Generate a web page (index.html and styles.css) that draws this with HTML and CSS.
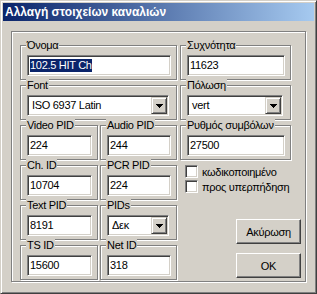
FILE: index.html
```html
<!DOCTYPE html>
<html lang="el">
<head>
    <meta charset="UTF-8">
    <title>Αλλαγή στοιχείων καναλιών</title>
    <link rel="stylesheet" href="styles.css">
</head>
<body>
    <div class="window">
        <div class="titlebar">Αλλαγή στοιχείων καναλιών</div>

        <div class="frame">
            <div class="left">
                <div class="group wide">
                    <span class="legend">Όνομα</span>
                    <div class="edit"><span class="selected">102.5 HIT Ch</span></div>
                </div>
                <div class="group wide">
                    <span class="legend">Font</span>
                    <div class="combo">
                        <span class="value">ISO 6937 Latin</span>
                        <span class="drop"><svg width="7" height="4" viewBox="0 0 7 4"><rect x="0" y="0" width="7" height="1"/><rect x="1" y="1" width="5" height="1"/><rect x="2" y="2" width="3" height="1"/><rect x="3" y="3" width="1" height="1"/></svg></span>
                    </div>
                </div>

                <div class="group">
                    <span class="legend">Video PID</span>
                    <div class="edit">224</div>
                </div>
                <div class="group">
                    <span class="legend">Audio PID</span>
                    <div class="edit">244</div>
                </div>

                <div class="group">
                    <span class="legend">Ch. ID</span>
                    <div class="edit">10704</div>
                </div>
                <div class="group">
                    <span class="legend">PCR PID</span>
                    <div class="edit">224</div>
                </div>

                <div class="group">
                    <span class="legend">Text PID</span>
                    <div class="edit">8191</div>
                </div>
                <div class="group">
                    <span class="legend">PIDs</span>
                    <div class="combo">
                        <span class="value">Δεκ</span>
                        <span class="drop"><svg width="7" height="4" viewBox="0 0 7 4"><rect x="0" y="0" width="7" height="1"/><rect x="1" y="1" width="5" height="1"/><rect x="2" y="2" width="3" height="1"/><rect x="3" y="3" width="1" height="1"/></svg></span>
                    </div>
                </div>

                <div class="group">
                    <span class="legend">TS ID</span>
                    <div class="edit">15600</div>
                </div>
                <div class="group">
                    <span class="legend">Net ID</span>
                    <div class="edit">318</div>
                </div>
            </div>

            <div class="right">
                <div class="group">
                    <span class="legend">Συχνότητα</span>
                    <div class="edit">11623</div>
                </div>
                <div class="group">
                    <span class="legend">Πόλωση</span>
                    <div class="combo">
                        <span class="value">vert</span>
                        <span class="drop"><svg width="7" height="4" viewBox="0 0 7 4"><rect x="0" y="0" width="7" height="1"/><rect x="1" y="1" width="5" height="1"/><rect x="2" y="2" width="3" height="1"/><rect x="3" y="3" width="1" height="1"/></svg></span>
                    </div>
                </div>
                <div class="group">
                    <span class="legend">Ρυθμός συμβόλων</span>
                    <div class="edit">27500</div>
                </div>

                <div class="checks">
                    <label class="check"><span class="box"></span>κωδικοποιημένο</label>
                    <label class="check"><span class="box"></span>προς υπερπήδηση</label>
                </div>

                <button class="btn cancel">Ακύρωση</button>
                <button class="btn ok">OK</button>
            </div>
        </div>
    </div>
</body>
</html>
```
FILE: styles.css
```css
body {
    margin: 0;
    background: #d4d0c8;
    font-family: "Liberation Sans", Arial, sans-serif;
    font-size: 11px;
    letter-spacing: -0.3px;
    color: #000;
}

.window {
    width: 317px;
    height: 294px;
    box-sizing: border-box;
    padding: 2px;
    background: #d4d0c8;
    border: 1px solid;
    border-color: #d4d0c8 #404040 #404040 #d4d0c8;
    box-shadow: inset 1px 1px #fff, inset -1px -1px #808080;
}

.titlebar {
    height: 18px;
    line-height: 18px;
    padding-left: 2px;
    background: linear-gradient(to right, #0a246a, #a6caf0);
    color: #fff;
    font-size: 12px;
    font-weight: bold;
    letter-spacing: 0;
    white-space: nowrap;
}

/* outer etched frame */
.frame {
    display: flex;
    height: 251px;
    box-sizing: border-box;
    margin: 10px 8px 0;
    padding: 13px 4px 1px 8px;
    border: 1px solid #808080;
    box-shadow: inset 1px 1px #fff, 1px 1px #fff;
}

.left {
    width: 157px;
    display: grid;
    grid-template-columns: 78px 77px;
    grid-auto-rows: 35px;
    column-gap: 2px;
    row-gap: 5px;
}

.wide {
    grid-column: span 2;
}

.right {
    flex: 1;
    margin-left: 3px;
    display: flex;
    flex-direction: column;
}

.right .group {
    width: 111px;
    height: 35px;
    margin-bottom: 5px;
}

/* group box */
.group {
    position: relative;
    box-sizing: border-box;
    padding: 9px 5px 0 6px;
    border: 1px solid #808080;
    box-shadow: inset 1px 1px #fff, 1px 1px #fff;
}

.legend {
    position: absolute;
    top: -7px;
    left: 5px;
    padding: 0 1px;
    line-height: 13px;
    background: #d4d0c8;
    white-space: nowrap;
}

/* sunken fields */
.edit,
.combo {
    height: 21px;
    box-sizing: border-box;
    background: #fff;
    border: 1px solid;
    border-color: #808080 #fff #fff #808080;
    box-shadow: inset 1px 1px #404040, inset -1px -1px #d4d0c8;
    line-height: 13px;
    white-space: nowrap;
    overflow: hidden;
}

.edit {
    padding: 3px 2px 0 2px;
}

.selected {
    display: inline-block;
    background: #0a246a;
    color: #fff;
}

.combo {
    display: flex;
    align-items: center;
    margin-right: 2px;
    padding: 1px;
}

.combo .value {
    flex: 1;
    padding-left: 3px;
}

.drop {
    width: 16px;
    height: 17px;
    box-sizing: border-box;
    display: flex;
    align-items: center;
    justify-content: center;
    background: #d4d0c8;
    border: 1px solid;
    border-color: #d4d0c8 #404040 #404040 #d4d0c8;
    box-shadow: inset 1px 1px #fff, inset -1px -1px #808080;
}

/* checkboxes */
.checks {
    margin-top: -1px;
}

.check {
    display: flex;
    align-items: center;
    height: 15px;
    white-space: nowrap;
}

.box {
    width: 13px;
    height: 13px;
    box-sizing: border-box;
    margin: 0 4px 0 5px;
    background: #fff;
    border: 1px solid;
    border-color: #808080 #fff #fff #808080;
    box-shadow: inset 1px 1px #404040, inset -1px -1px #d4d0c8;
}

/* push buttons */
.btn {
    align-self: flex-end;
    width: 65px;
    height: 25px;
    padding: 0;
    font: inherit;
    letter-spacing: inherit;
    color: #000;
    background: #d4d0c8;
    border: 1px solid;
    border-color: #fff #404040 #404040 #fff;
    box-shadow: inset -1px -1px #808080;
}

.cancel {
    margin-top: 25px;
}

.ok {
    margin-top: 9px;
}
```
